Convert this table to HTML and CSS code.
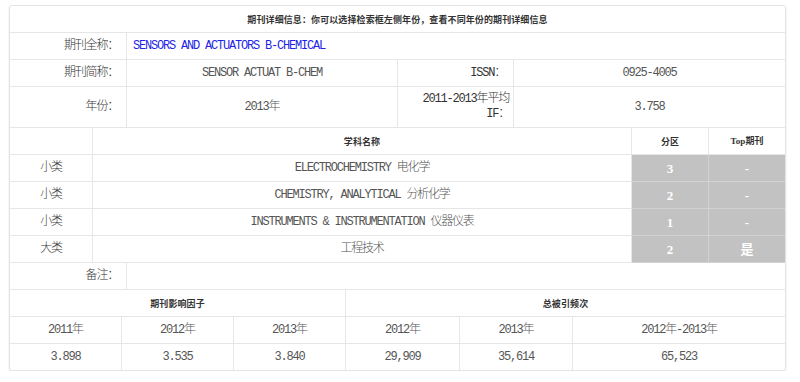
FILE: index.html
```html
<!DOCTYPE html>
<html lang="zh">
<head>
<meta charset="utf-8">
<title>期刊详细信息</title>
<link rel="stylesheet" href="styles.css">
</head>
<body>
<div class="journal">
  <table class="grid info">
    <colgroup><col class="w-label"><col class="w-val"><col class="w-lab2"><col></colgroup>
    <tr class="head"><td colspan="4">期刊详细信息：你可以选择检索框左侧年份，查看不同年份的期刊详细信息</td></tr>
    <tr><td class="label">期刊全称：</td><td colspan="3" class="link">SENSORS AND ACTUATORS B-CHEMICAL</td></tr>
    <tr><td class="label">期刊简称：</td><td>SENSOR ACTUAT B-CHEM</td><td class="label">ISSN：</td><td>0925-4005</td></tr>
    <tr class="tall"><td class="label">年份：</td><td>2013年</td><td class="label wrap">2011-2013年平均IF：</td><td>3.758</td></tr>
  </table>
  <table class="grid subjects">
    <colgroup><col class="w-kind"><col class="w-name"><col class="w-zone"><col></colgroup>
    <tr class="head"><td></td><td>学科名称</td><td>分区</td><td class="top">Top期刊</td></tr>
    <tr><td class="kind">小类</td><td>ELECTROCHEMISTRY 电化学</td><td class="zone">3</td><td class="zone">-</td></tr>
    <tr><td class="kind">小类</td><td>CHEMISTRY, ANALYTICAL 分析化学</td><td class="zone">2</td><td class="zone">-</td></tr>
    <tr><td class="kind">小类</td><td>INSTRUMENTS &amp; INSTRUMENTATION 仪器仪表</td><td class="zone">1</td><td class="zone">-</td></tr>
    <tr><td class="kind">大类</td><td>工程技术</td><td class="zone">2</td><td class="zone">是</td></tr>
  </table>
  <table class="grid note">
    <colgroup><col class="w-label"><col></colgroup>
    <tr><td class="label">备注：</td><td></td></tr>
  </table>
  <table class="grid impact">
    <colgroup><col class="w-y1"><col class="w-y2"><col class="w-y3"><col class="w-y4"><col class="w-y5"><col></colgroup>
    <tr class="head"><td colspan="3">期刊影响因子</td><td colspan="3">总被引频次</td></tr>
    <tr><td>2011年</td><td>2012年</td><td>2013年</td><td>2012年</td><td>2013年</td><td>2012年-2013年</td></tr>
    <tr><td>3.898</td><td>3.535</td><td>3.840</td><td>29,909</td><td>35,614</td><td>65,523</td></tr>
  </table>
</div>
</body>
</html>
```
FILE: styles.css
```css
html, body { margin: 0; padding: 0; background: #fff; }
body { padding: 5px 0 0 9px; }

.journal {
  width: 775px;
  border: 1px solid #e4e4e4;
  border-radius: 3px;
  box-shadow: 0 1px 2px rgba(0,0,0,0.12);
  display: flex;
  flex-direction: column;
  overflow: hidden;
}

.grid {
  width: 775px;
  table-layout: fixed;
  border-collapse: separate;
  border-spacing: 0;
  font-family: "Liberation Mono", "Noto Sans CJK SC", monospace;
  font-size: 12px;
  font-weight: 300;
  letter-spacing: -1.2px;
  color: #555;
}
.grid td {
  height: 26px;
  padding: 0 6px;
  border-right: 1px solid #e6e6e6;
  border-bottom: 1px solid #e6e6e6;
  text-align: center;
  vertical-align: middle;
  line-height: 15px;
  white-space: nowrap;
}
.grid td:last-child { border-right: 0; }
.impact tr:last-child td { border-bottom: 0; }

.w-label { width: 117px; }
.w-val { width: 271px; }
.w-lab2 { width: 116px; }
.w-kind { width: 83px; }
.w-name { width: 539px; }
.w-zone { width: 77px; }
.w-y1, .w-y2, .w-y3 { width: 112px; }
.w-y4 { width: 114px; }
.w-y5 { width: 113px; }

.grid .head td {
  font-family: "Noto Sans CJK SC", "Liberation Serif", serif;
  font-size: 9px;
  font-weight: bold;
  letter-spacing: 0.1px;
  color: #333;
}
.grid .head td.top { font-family: "Liberation Serif", "Noto Sans CJK SC", serif; }

.grid td.label {
  text-align: right;
  padding-right: 8px;
  color: #333;
}
.grid td.wrap { white-space: normal; padding-left: 14px; padding-right: 4px; }
.grid .tall td { height: 40px; }

.grid td.link {
  text-align: left;
  color: #1f1fe6;
  padding-left: 6px;
}
.grid td.kind { color: #444; }
.grid td.zone {
  background: #c2c2c2;
  color: #fff;
  border-right-color: #d2d2d2;
  border-bottom-color: #d2d2d2;
  font-family: "Liberation Serif", "Noto Sans CJK SC", serif;
  font-size: 13px;
  font-weight: bold;
  letter-spacing: 0;
}
```
